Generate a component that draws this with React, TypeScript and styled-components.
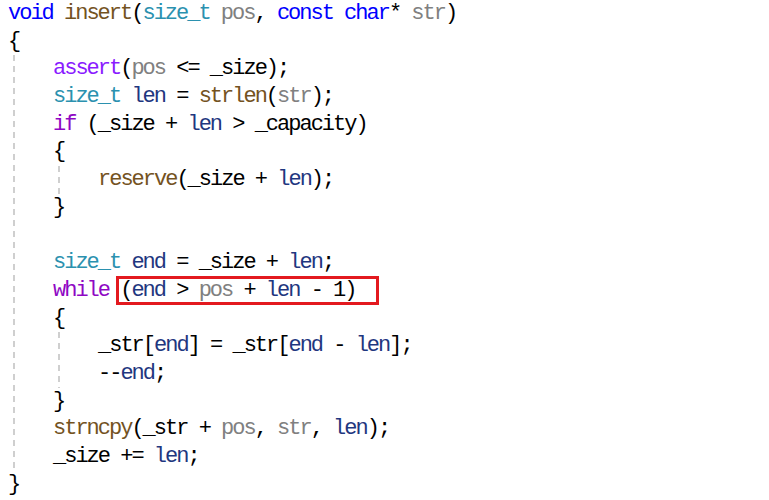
import React from "react";
import styled, { createGlobalStyle } from "styled-components";

const Global = createGlobalStyle`
  html, body { margin: 0; padding: 0; background: #ffffff; }
  body { width: 769px; height: 500px; overflow: hidden; }
`;

const Editor = styled.div`
  padding: 0 0 0 8px;
  font-family: "Liberation Mono", "Noto Sans CJK SC", monospace;
  font-size: 22px;
  letter-spacing: -2px;
  line-height: 27.7px;
  color: #000000;
  white-space: pre;
`;

const Line = styled.div`
  height: 27.7px;
`;

const Body = styled.div`
  padding-left: 45px;
  background-image: repeating-linear-gradient(
    to bottom,
    #cfcfcf 0px,
    #cfcfcf 6px,
    transparent 6px,
    transparent 11px
  );
  background-size: 2px 100%;
  background-repeat: no-repeat;
  background-position: 5px 0;
`;

type Kind = "kw" | "fn" | "ty" | "pa" | "ma" | "ct" | "lo";

const colors: Record<Kind, string> = {
  kw: "#0000ff",
  fn: "#74531f",
  ty: "#2b91af",
  pa: "#808080",
  ma: "#8a1bff",
  ct: "#8f08c4",
  lo: "#1f377f",
};

const Tok = styled.span<{ $k: Kind }>`
  color: ${(p) => colors[p.$k]};
`;

const Highlight = styled.span`
  display: inline-block;
  border: 3px solid #e3191f;
  padding: 0 21px 0 1px;
  margin: -1px 0 -1px -4px;
  line-height: 23px;
`;

export default function App() {
  return (
    <>
      <Global />
      <Editor>
        <Line>
          <Tok $k="kw">void</Tok> <Tok $k="fn">insert</Tok>(<Tok $k="ty">size_t</Tok>{" "}
          <Tok $k="pa">pos</Tok>, <Tok $k="kw">const</Tok> <Tok $k="kw">char</Tok>*{" "}
          <Tok $k="pa">str</Tok>)
        </Line>
        <Line>{"{"}</Line>
        <Body>
          <Line>
            <Tok $k="ma">assert</Tok>(<Tok $k="pa">pos</Tok> {"<="} _size);
          </Line>
          <Line>
            <Tok $k="ty">size_t</Tok> <Tok $k="lo">len</Tok> = <Tok $k="fn">strlen</Tok>(
            <Tok $k="pa">str</Tok>);
          </Line>
          <Line>
            <Tok $k="ct">if</Tok> (_size + <Tok $k="lo">len</Tok> {">"} _capacity)
          </Line>
          <Line>{"{"}</Line>
          <Body>
            <Line>
              <Tok $k="fn">reserve</Tok>(_size + <Tok $k="lo">len</Tok>);
            </Line>
          </Body>
          <Line>{"}"}</Line>
          <Line> </Line>
          <Line>
            <Tok $k="ty">size_t</Tok> <Tok $k="lo">end</Tok> = _size + <Tok $k="lo">len</Tok>;
          </Line>
          <Line>
            <Tok $k="ct">while</Tok>{" "}
            <Highlight>
              (<Tok $k="lo">end</Tok> {">"} <Tok $k="pa">pos</Tok> + <Tok $k="lo">len</Tok> - 1)
            </Highlight>
          </Line>
          <Line>{"{"}</Line>
          <Body>
            <Line>
              _str[<Tok $k="lo">end</Tok>] = _str[<Tok $k="lo">end</Tok> - <Tok $k="lo">len</Tok>];
            </Line>
            <Line>
              --<Tok $k="lo">end</Tok>;
            </Line>
          </Body>
          <Line>{"}"}</Line>
          <Line>
            <Tok $k="fn">strncpy</Tok>(_str + <Tok $k="pa">pos</Tok>, <Tok $k="pa">str</Tok>,{" "}
            <Tok $k="lo">len</Tok>);
          </Line>
          <Line>
            _size += <Tok $k="lo">len</Tok>;
          </Line>
        </Body>
        <Line>{"}"}</Line>
      </Editor>
    </>
  );
}
